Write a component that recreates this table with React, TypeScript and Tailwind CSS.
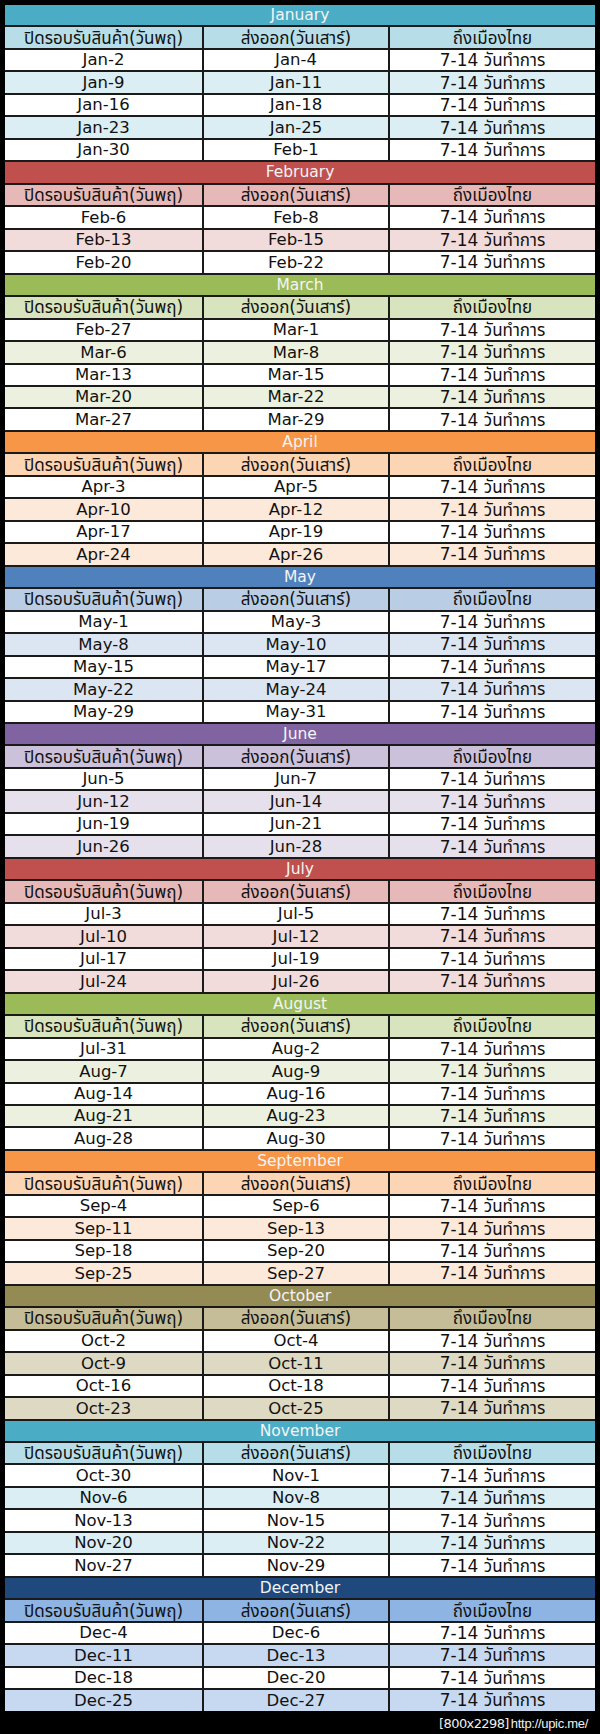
import React from 'react';

type Month = {
  name: string;
  bar: string;
  head: string;
  alt: string;
  rows: [string, string][];
};

const months: Month[] = [
  { name: 'January', bar: 'bg-[#4bacc6]', head: 'bg-[#b7dee8]', alt: 'bg-[#daeef3]',
    rows: [['Jan-2', 'Jan-4'], ['Jan-9', 'Jan-11'], ['Jan-16', 'Jan-18'], ['Jan-23', 'Jan-25'], ['Jan-30', 'Feb-1']] },
  { name: 'February', bar: 'bg-[#c0504d]', head: 'bg-[#e6b9b8]', alt: 'bg-[#f2dcdb]',
    rows: [['Feb-6', 'Feb-8'], ['Feb-13', 'Feb-15'], ['Feb-20', 'Feb-22']] },
  { name: 'March', bar: 'bg-[#9bbb59]', head: 'bg-[#d7e4bd]', alt: 'bg-[#ebf1de]',
    rows: [['Feb-27', 'Mar-1'], ['Mar-6', 'Mar-8'], ['Mar-13', 'Mar-15'], ['Mar-20', 'Mar-22'], ['Mar-27', 'Mar-29']] },
  { name: 'April', bar: 'bg-[#f79646]', head: 'bg-[#fcd5b5]', alt: 'bg-[#fde9d9]',
    rows: [['Apr-3', 'Apr-5'], ['Apr-10', 'Apr-12'], ['Apr-17', 'Apr-19'], ['Apr-24', 'Apr-26']] },
  { name: 'May', bar: 'bg-[#4f81bd]', head: 'bg-[#b9cde5]', alt: 'bg-[#dce6f2]',
    rows: [['May-1', 'May-3'], ['May-8', 'May-10'], ['May-15', 'May-17'], ['May-22', 'May-24'], ['May-29', 'May-31']] },
  { name: 'June', bar: 'bg-[#8064a2]', head: 'bg-[#ccc1da]', alt: 'bg-[#e6e0ec]',
    rows: [['Jun-5', 'Jun-7'], ['Jun-12', 'Jun-14'], ['Jun-19', 'Jun-21'], ['Jun-26', 'Jun-28']] },
  { name: 'July', bar: 'bg-[#c0504d]', head: 'bg-[#e6b9b8]', alt: 'bg-[#f2dcdb]',
    rows: [['Jul-3', 'Jul-5'], ['Jul-10', 'Jul-12'], ['Jul-17', 'Jul-19'], ['Jul-24', 'Jul-26']] },
  { name: 'August', bar: 'bg-[#9bbb59]', head: 'bg-[#d7e4bd]', alt: 'bg-[#ebf1de]',
    rows: [['Jul-31', 'Aug-2'], ['Aug-7', 'Aug-9'], ['Aug-14', 'Aug-16'], ['Aug-21', 'Aug-23'], ['Aug-28', 'Aug-30']] },
  { name: 'September', bar: 'bg-[#f79646]', head: 'bg-[#fcd5b5]', alt: 'bg-[#fde9d9]',
    rows: [['Sep-4', 'Sep-6'], ['Sep-11', 'Sep-13'], ['Sep-18', 'Sep-20'], ['Sep-25', 'Sep-27']] },
  { name: 'October', bar: 'bg-[#948a54]', head: 'bg-[#c4bd97]', alt: 'bg-[#ddd9c3]',
    rows: [['Oct-2', 'Oct-4'], ['Oct-9', 'Oct-11'], ['Oct-16', 'Oct-18'], ['Oct-23', 'Oct-25']] },
  { name: 'November', bar: 'bg-[#4bacc6]', head: 'bg-[#b7dee8]', alt: 'bg-[#daeef3]',
    rows: [['Oct-30', 'Nov-1'], ['Nov-6', 'Nov-8'], ['Nov-13', 'Nov-15'], ['Nov-20', 'Nov-22'], ['Nov-27', 'Nov-29']] },
  { name: 'December', bar: 'bg-[#1f497d]', head: 'bg-[#8eb4e3]', alt: 'bg-[#c6d9f1]',
    rows: [['Dec-4', 'Dec-6'], ['Dec-11', 'Dec-13'], ['Dec-18', 'Dec-20'], ['Dec-25', 'Dec-27']] },
];

const font = { fontFamily: '"DejaVu Sans", "Noto Sans Thai", Tahoma, sans-serif' };

// dates are latin, the header and last column are mostly thai
function Row({ cells, bg, thai }: { cells: string[]; bg: string; thai?: boolean }) {
  return (
    <div className="grid grid-cols-[197px_184px_205px] gap-x-[2px] h-[20.47px]">
      {cells.map((c, i) => (
        <div
          key={i}
          className={`${bg} flex items-center justify-center pt-[1px] leading-none text-[#111] ${
            thai || i === 2 ? 'text-[17px]' : 'text-[16.5px]'
          }`}
        >
          {c}
        </div>
      ))}
    </div>
  );
}

export default function App() {
  return (
    <div className="w-[600px] h-[1734px] bg-black pt-[5px] px-[5px] flex flex-col" style={font}>
      <div className="flex flex-col gap-[2px] bg-[#1a1a1a]">
        {months.map((m) => (
          <React.Fragment key={m.name}>
            <div className={`${m.bar} h-[20.47px] flex items-center justify-center pt-[1px] text-[15.5px] leading-none text-[#f4f4f4]`}>
              {m.name}
            </div>
            <Row cells={['ปิดรอบรับสินค้า(วันพฤ)', 'ส่งออก(วันเสาร์)', 'ถึงเมืองไทย']} bg={m.head} thai />
            {m.rows.map((r, i) => (
              <Row key={i} cells={[r[0], r[1], '7-14 วันทำการ']} bg={i % 2 === 1 ? m.alt : 'bg-white'} />
            ))}
          </React.Fragment>
        ))}
      </div>
      <div className="flex justify-end items-baseline pr-[7px] pt-[6px] leading-none text-[#f0f0f0]">
        <span className="text-[13px] tracking-[-0.6px]">[800x2298]</span>
        <span className="ml-[2px] text-[13px] tracking-[-0.3px]" style={{ fontFamily: '"Liberation Sans", sans-serif' }}>http://upic.me/</span>
      </div>
    </div>
  );
}
